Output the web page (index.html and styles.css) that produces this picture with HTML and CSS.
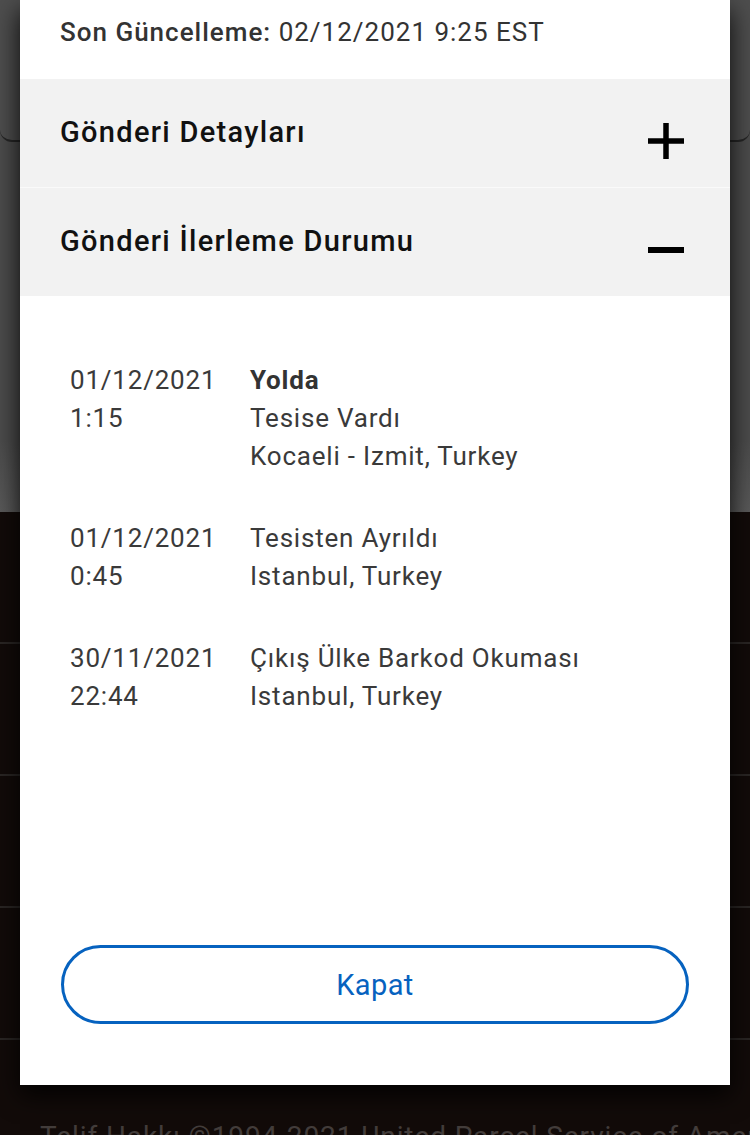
FILE: index.html
```html
<!DOCTYPE html>
<html lang="tr">
<head>
<meta charset="utf-8">
<title>Gönderi İlerleme Durumu</title>
<link rel="stylesheet" href="styles.css">
</head>
<body>

   <!-- page behind the dialog, dimmed by the overlay -->
   <div class="page">
      <div class="page_top">
         <div class="ghost_card"></div>
      </div>
      <div class="footer">
         <div class="footer_row"></div>
         <div class="footer_row"></div>
         <div class="footer_row"></div>
         <div class="footer_row"></div>
         <p class="copyright">Telif Hakkı ©1994-2021 United Parcel Service of America, Inc.</p>
      </div>
   </div>

   <!-- the dialog itself -->
   <div class="modal">
      <div class="updated">
         <span class="updated_label">Son Güncelleme:</span> 02/12/2021 9:25 EST
      </div>

      <div class="accordion_row">
         <h2>Gönderi Detayları</h2>
         <svg class="toggle" width="36" height="36" viewBox="0 0 36 36">
            <path d="M0 18H36M18 0V36" stroke="#000" stroke-width="5.5" stroke-linecap="round"/>
         </svg>
      </div>
      <div class="accordion_row">
         <h2>Gönderi İlerleme Durumu</h2>
         <svg class="toggle" width="36" height="36" viewBox="0 0 36 36">
            <path d="M1 18H35" stroke="#000" stroke-width="6" stroke-linecap="round"/>
         </svg>
      </div>

      <div class="progress">
         <div class="entry">
            <div class="entry_date">01/12/2021<br>1:15</div>
            <div class="entry_text">
               <strong>Yolda</strong><br>
               Tesise Vardı<br>
               Kocaeli - Izmit, Turkey
            </div>
         </div>
         <div class="entry">
            <div class="entry_date">01/12/2021<br>0:45</div>
            <div class="entry_text">
               Tesisten Ayrıldı<br>
               Istanbul, Turkey
            </div>
         </div>
         <div class="entry">
            <div class="entry_date">30/11/2021<br>22:44</div>
            <div class="entry_text">
               Çıkış Ülke Barkod Okuması<br>
               Istanbul, Turkey
            </div>
         </div>
      </div>

      <button class="close_button">Kapat</button>
   </div>

</body>
</html>
```

FILE: styles.css
```css
body
{
   margin: 0 ;
   font-family: Roboto, "Liberation Sans", sans-serif ;
   background-color: #120b09 ;
   overflow: hidden ;
}

.page
{
   height: 1135px ;
   overflow: hidden ;
}

.page_top
{
   height: 512px ;
   background: linear-gradient( #4c4c4c, #4c4c4c 440px, #5a5a5a ) ;
}

.ghost_card
{
   height: 140px ;
   background-color: #4e4e4e ;
   border-bottom: 2px solid #262626 ;
   border-radius: 0 0 12px 12px ;
}

.footer_row
{
   height: 130px ;
   border-bottom: 2px solid #2a2624 ;
}

.copyright
{
   margin: 0 ;
   padding: 82px 40px 0 ;
   font-size: 28px ;
   letter-spacing: 0.9px ;
   line-height: 30px ;
   color: #433d3b ;
   white-space: nowrap ;
}

/* Dialog floating over the page */
.modal
{
   position: absolute ;
   top: 0 ;
   left: 20px ;
   width: 710px ;
   height: 1085px ;
   background-color: #fff ;
   box-shadow: 0 10px 24px rgba( 0, 0, 0, 0.9 ) ;
   display: flex ;
   flex-direction: column ;
}

.updated
{
   height: 79px ;
   box-sizing: border-box ;
   padding: 14px 40px 0 ;
   font-size: 26px ;
   letter-spacing: 1px ;
   line-height: 36px ;
   color: #333 ;
}

.updated_label
{
   font-weight: 500 ;
}

.accordion_row
{
   height: 108px ;
   display: flex ;
   align-items: center ;
   justify-content: space-between ;
   padding: 0 46px 0 40px ;
   background-color: #f2f2f2 ;
}

.accordion_row + .accordion_row
{
   border-top: 1px solid #fafafa ;
}

.accordion_row h2
{
   margin: 0 0 2px ;
   font-size: 29px ;
   letter-spacing: 1.3px ;
   font-weight: 500 ;
   color: #111 ;
}

.toggle
{
   margin-top: 16px ;
}

.progress
{
   flex: 1 ;
   padding: 65px 50px 0 ;
   font-size: 26px ;
   letter-spacing: 0.8px ;
   line-height: 38px ;
   color: #3a3a3a ;
}

.entry
{
   display: flex ;
   margin-bottom: 44px ;
}

.entry_date
{
   width: 180px ;
   flex-shrink: 0 ;
}

.entry_text strong
{
   font-weight: 700 ;
   color: #333 ;
}

.close_button
{
   margin: 0 41px 61px ;
   height: 79px ;
   border: 3px solid #0662bf ;
   border-radius: 40px ;
   background-color: #fff ;
   color: #0662bf ;
   font-family: Roboto, "Liberation Sans", sans-serif ;
   font-size: 29px ;
   letter-spacing: 0.4px ;
}
```
